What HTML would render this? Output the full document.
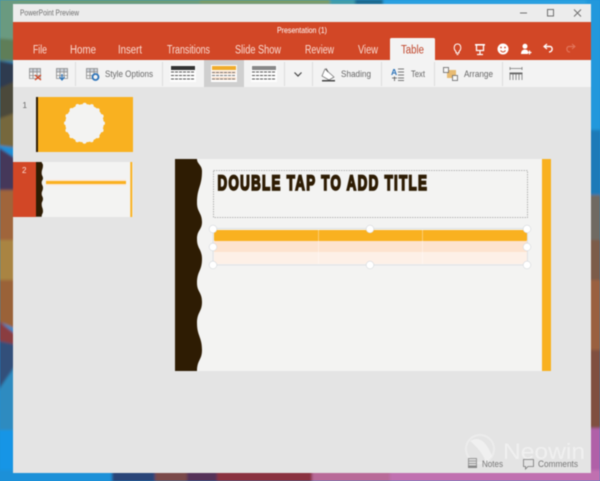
<!DOCTYPE html>
<html><head><meta charset="utf-8">
<style>
html,body{margin:0;padding:0;width:600px;height:481px;overflow:hidden;background:#1a90d8}
svg{display:block;filter:blur(.4px)}
text{font-family:"Liberation Sans",sans-serif}
</style></head><body>
<svg width="600" height="481" viewBox="0 0 600 481" xmlns="http://www.w3.org/2000/svg">
<defs>
<filter id="b" x="-10%" y="-10%" width="120%" height="120%"><feGaussianBlur stdDeviation="1.200"/></filter>
<path id="wave" d="M175 159H197C197 164 202 165 202 171C202 187 197 187 197 203C197 212 202 213 202 222C202 230 197 230 197 239C197 249 202 249 202 259C202 271 197 271 197 283C197 292 202 292 202 302C202 312 197 312 197 323C197 336 202 337 202 350C202 360 197 360 197 371H175Z"/>
</defs>
<!-- wallpaper -->
<g filter="url(#b)">
<rect x="-5" y="-5" width="610" height="491" fill="#1a90d8"/>
<rect x="-5" y="-5" width="205" height="10" fill="#6c9c78"/>
<rect x="200" y="-5" width="130" height="10" fill="#7a9c68"/>
<rect x="330" y="-5" width="30" height="10" fill="#3f9ca8"/>
<rect x="355" y="-5" width="28" height="10" fill="#1d6a90"/>
<rect x="383" y="-5" width="222" height="10" fill="#2aa0e0"/>
<polygon points="-5,-5 18,-5 18,60 -5,60" fill="#6a9a80"/>
<polygon points="-5,38 18,40 18,62 -5,60" fill="#5f7e58"/>
<polygon points="-5,60 18,64 18,100 -5,95" fill="#2f3a4f"/>
<polygon points="-5,90 18,80 18,118 -5,130" fill="#4c4a3a"/>
<polygon points="-5,120 18,112 18,148 -5,145" fill="#76683c"/>
<polygon points="-5,145 18,160 18,200 -5,190" fill="#45395a"/>
<polygon points="-5,190 18,190 18,240 -5,240" fill="#a0653a"/>
<polygon points="-5,240 18,240 18,283 -5,283" fill="#a98442"/>
<polygon points="-5,280 18,280 18,330 -5,320" fill="#9a6238"/>
<polygon points="-5,318 18,336 18,350 -5,345" fill="#8a3c40"/>
<polygon points="-5,340 18,345 18,362 -5,395" fill="#30507a"/>
<polygon points="-5,395 18,362 18,430 -5,430" fill="#2f8bc0"/>
<rect x="-5" y="430" width="18" height="56" fill="#1495e6"/>
<rect x="586" y="-5" width="19" height="135" fill="#2198dc"/>
<rect x="586" y="130" width="19" height="70" fill="#1c7ab8"/>
<rect x="586" y="195" width="19" height="50" fill="#6f6a62"/>
<rect x="586" y="240" width="19" height="40" fill="#7c5c4a"/>
<rect x="586" y="280" width="19" height="70" fill="#9a6040"/>
<rect x="586" y="350" width="19" height="80" fill="#80503f"/>
<rect x="586" y="428" width="19" height="58" fill="#b060a8"/>
<rect x="-5" y="470" width="117" height="16" fill="#1a90d8"/>
<rect x="112" y="470" width="44" height="16" fill="#2c4478"/>
<rect x="155" y="470" width="32" height="16" fill="#7a4a4a"/>
<rect x="187" y="470" width="30" height="16" fill="#553058"/>
<rect x="217" y="470" width="95" height="16" fill="#8a3040"/>
<rect x="312" y="470" width="78" height="16" fill="#b86a98"/>
<rect x="390" y="470" width="215" height="16" fill="#c070b0"/>
</g>
<!-- window -->
<rect x="13" y="4" width="578" height="469" fill="#e4e4e4"/>
<rect x="13" y="4" width="578" height="18" fill="#ececec"/>
<text x="20" y="15.500" font-size="8" fill="#6e6e6e" textLength="59" lengthAdjust="spacingAndGlyphs">PowerPoint Preview</text>
<g stroke="#707070" fill="none" stroke-width="1">
<path d="M520 13H527"/>
<rect x="547.500" y="9.500" width="6" height="6.500"/>
<path d="M574 9.500L581 16.500M581 9.500L574 16.500"/>
</g>
<!-- red header -->
<rect x="13" y="22" width="578" height="38" fill="#d24726"/>
<text x="277" y="33" font-size="8.500" fill="#fff" textLength="50" lengthAdjust="spacingAndGlyphs">Presentation (1)</text>
<g font-size="11.500" fill="#f9dcd3">
<text x="33" y="53.500" textLength="14" lengthAdjust="spacingAndGlyphs">File</text>
<text x="70" y="53.500" textLength="26" lengthAdjust="spacingAndGlyphs">Home</text>
<text x="118" y="53.500" textLength="24" lengthAdjust="spacingAndGlyphs">Insert</text>
<text x="167" y="53.500" textLength="43" lengthAdjust="spacingAndGlyphs">Transitions</text>
<text x="235" y="53.500" textLength="46" lengthAdjust="spacingAndGlyphs">Slide Show</text>
<text x="305" y="53.500" textLength="29" lengthAdjust="spacingAndGlyphs">Review</text>
<text x="358" y="53.500" textLength="20" lengthAdjust="spacingAndGlyphs">View</text>
</g>
<path d="M390 60V39.500Q390 38 391.500 38H433.500Q435 38 435 39.500V60Z" fill="#f3f3f3"/>
<text x="401" y="53.500" font-size="11.500" fill="#c0452a" textLength="23" lengthAdjust="spacingAndGlyphs">Table</text>
<!-- header icons -->
<g fill="none" stroke="#fff" stroke-width="1">
<path d="M456 51.500C453 49 454 44 457.500 44C461 44 462 49 459 51.500V53H456Z"/>
<path d="M456.500 54.500H458.500"/>
<path d="M475 44.800H485" stroke-width="1.600"/>
<path d="M476.500 45V50.500H483.500V45" stroke-width="1.300"/>
<path d="M480 50.500V54M477 54.500H483" stroke-width="1.200"/>
<path d="M544 46.500H550C553 46.500 553 52 549 52" stroke-width="1.400"/>
<path d="M547 44L544 46.500L547 49" stroke-width="1.200"/>
</g>
<circle cx="503" cy="49" r="5.500" fill="#fff"/>
<circle cx="501" cy="47.500" r=".9" fill="#d24726"/><circle cx="505" cy="47.500" r=".9" fill="#d24726"/>
<path d="M500.500 50.500Q503 53.500 505.500 50.500" stroke="#d24726" fill="none"/>
<circle cx="525" cy="46.300" r="2.500" fill="#fff"/>
<path d="M521 54C521 50.500 523 49.500 525 49.500C526.500 49.500 527.500 50 528 51V54Z" fill="#fff"/>
<path d="M529.500 50.500V54.500M527.500 52.500H531.500" stroke="#fff" stroke-width="1.200"/>
<path d="M575 46.500H569C566 46.500 566 52 570 52" stroke="#e2765c" fill="none" stroke-width="1.200"/>
<path d="M572 44L575 46.500L572 49" stroke="#e2765c" fill="none"/>
<!-- ribbon -->
<rect x="13" y="60" width="578" height="27" fill="#f3f3f3"/>
<rect x="204" y="60" width="40" height="27" fill="#cfcfcf"/>
<g stroke="#dcdcdc">
<path d="M75.500 62V86M162.500 62V86M284.500 62V86M312.500 62V86M381.500 62V86M434.500 62V86M502.500 62V86"/>
</g>
<!-- table icons -->
<rect x="29.500" y="68.500" width="11" height="3.500" fill="#c9ced6"/>
<rect x="56.500" y="68.500" width="11" height="3.500" fill="#c9ced6"/>
<rect x="86.500" y="68.500" width="11" height="3.500" fill="#c9ced6"/>
<g fill="none" stroke="#8a8a8a" stroke-width=".8">
<path d="M29.500 68.500H40.500V78.500H29.500ZM29.500 72H40.500M29.500 75.500H40.500M33 68.500V78.500M37 68.500V78.500"/>
<path d="M56.500 68.500H67.500V78.500H56.500ZM56.500 72H67.500M56.500 75.500H67.500M60 68.500V78.500M64 68.500V78.500"/>
<path d="M86.500 68.500H97.500V78.500H86.500ZM86.500 72H97.500M86.500 75.500H97.500M90 68.500V78.500M94 68.500V78.500"/>
</g>
<path d="M35 75L41 80M41 75L35 80" stroke="#d24726" stroke-width="1.300"/>
<path d="M62 74V79M59.500 77L62 80L64.500 77" stroke="#2b72b8" fill="none" stroke-width="1.200"/>
<circle cx="95.500" cy="77" r="3" fill="#f3f3f3" stroke="#2b72b8" stroke-width="1.800"/>
<text x="105" y="77" font-size="9.500" fill="#666" textLength="48" lengthAdjust="spacingAndGlyphs">Style Options</text>
<!-- gallery -->
<rect x="170" y="65" width="26" height="17" fill="#fdfdfd"/>
<rect x="171" y="66" width="24" height="4" fill="#333"/>
<rect x="211" y="65" width="26" height="17" fill="#fdfdfd"/>
<rect x="212" y="66" width="24" height="4" fill="#f0ac2c"/>
<rect x="212" y="71" width="24" height="3" fill="#fde3cf"/>
<rect x="212" y="77" width="24" height="3" fill="#fde3cf"/>
<rect x="251" y="65" width="26" height="17" fill="#fdfdfd"/>
<rect x="252" y="66" width="24" height="4" fill="#888"/>
<g stroke="#555" stroke-width="1" stroke-dasharray="3 1">
<path d="M171 72H195M171 75.500H195M171 79H195"/>
<path d="M212 72.500H236M212 75.500H236M212 79H236" stroke="#777"/>
<path d="M252 72H276M252 75.500H276M252 79H276"/>
</g>
<path d="M294.500 72.500L298 76L301.500 72.500" stroke="#444" fill="none" stroke-width="1.200"/>
<!-- shading -->
<path d="M325 69L334 77L329 80L322 76Z" fill="#fff" stroke="#777" stroke-width=".8"/>
<rect x="322" y="80" width="13" height="1.500" fill="#444"/>
<path d="M326 68.500L328 72" stroke="#555"/>
<text x="341" y="77" font-size="9.500" fill="#666" textLength="30" lengthAdjust="spacingAndGlyphs">Shading</text>
<text x="391" y="75" font-size="8.500" font-weight="bold" fill="#2b72b8">A</text>
<path d="M392 78H397M394.500 76.500V81" stroke="#555" stroke-width=".8"/>
<path d="M398 69H404M398 72H404M398 75H404M398 78H404M398 80.500H404" stroke="#777" stroke-width=".9"/>
<text x="411" y="77" font-size="9.500" fill="#666" textLength="14" lengthAdjust="spacingAndGlyphs">Text</text>
<!-- arrange -->
<rect x="447" y="70" width="9" height="8" fill="#e8bb72"/>
<rect x="443.500" y="67.500" width="5" height="5" fill="#f7f7f7" stroke="#666" stroke-width=".8"/>
<rect x="452.500" y="75.500" width="5" height="5" fill="#f7f7f7" stroke="#666" stroke-width=".8"/>
<text x="464" y="77" font-size="9.500" fill="#666" textLength="29" lengthAdjust="spacingAndGlyphs">Arrange</text>
<path d="M510 68.500H522M510 67V70M522 67V70" stroke="#777" stroke-width=".8" fill="none"/>
<path d="M510 74H522V80M510 74V80M513 74V80M516 74V80M519 74V80" stroke="#777" stroke-width=".8" fill="none"/>
<rect x="509.500" y="72.500" width="13" height="1.500" fill="#666"/>
<!-- thumbnails -->
<text x="22.500" y="108" font-size="8" fill="#666">1</text>
<rect x="36" y="97" width="97" height="55" fill="#f9b120"/>
<rect x="36" y="97" width="2" height="55" fill="#2e1c03"/>
<circle cx="84.500" cy="123.200" r="19.200" fill="#f3f3f2"/>
<circle cx="84.500" cy="123.200" r="18.500" fill="none" stroke="#f3f3f2" stroke-width="4" stroke-linecap="round" stroke-dasharray="0 7.265"/>
<rect x="13" y="162" width="23" height="55" fill="#d24726"/>
<text x="22" y="173" font-size="8" fill="#fbe0d8">2</text>
<rect x="36" y="162" width="97" height="55" fill="#f3f3f2"/>
<use href="#wave" transform="translate(36,162) scale(.258) translate(-175,-159)" fill="#2e1c03"/>
<rect x="130.300" y="162" width="2" height="55" fill="#f9b120"/>
<rect x="46" y="179.500" width="80" height="6" fill="#fde3cf" opacity=".7"/>
<rect x="46" y="181" width="80" height="3" fill="#f9b120"/>
<!-- slide -->
<rect x="175" y="159" width="376" height="212" fill="#f3f3f2"/>
<use href="#wave" fill="#2e1c03"/>
<rect x="542" y="159" width="9" height="212" fill="#f9b120"/>
<rect x="213.500" y="170.500" width="314" height="47" fill="none" stroke="#a3a3a3" stroke-width=".8" stroke-dasharray="1.500 1"/>
<text transform="translate(217.500,189.800) scale(.62,1)" font-size="21.500" font-weight="bold" fill="#2e1c03" stroke="#2e1c03" stroke-width="1.800" stroke-linejoin="miter" letter-spacing="2.150">DOUBLE TAP TO ADD TITLE</text>
<!-- table -->
<rect x="214" y="230" width="313" height="11" rx="1" fill="#f9b120"/>
<rect x="214" y="241" width="313" height="11" fill="#fde3cf"/>
<rect x="214" y="252" width="313" height="12" fill="#fdf0e7"/>
<path d="M318.500 230V264M422.500 230V264" stroke="#fff" stroke-opacity=".45" stroke-width=".8"/>
<rect x="213" y="228.500" width="314.500" height="36.500" fill="none" stroke="#dfe2e5" stroke-width="1"/>
<g fill="#fff" stroke="#d6d9dd" stroke-width=".6">
<circle cx="213" cy="229" r="3.800"/><circle cx="370" cy="229" r="3.800"/><circle cx="527" cy="229" r="3.800"/>
<circle cx="213" cy="247" r="3.800"/><circle cx="527" cy="247" r="3.800"/>
<circle cx="213" cy="265" r="3.800"/><circle cx="370" cy="265" r="3.800"/><circle cx="527" cy="265" r="3.800"/>
</g>
<!-- watermark -->
<circle cx="480" cy="449" r="14" fill="none" stroke="#fff" stroke-opacity=".3" stroke-width="2"/>
<path d="M470 441C478 436 486 440 492 456L486 462C482 452 476 446 470 441Z" fill="#fff" fill-opacity=".45"/>
<text x="503" y="459" font-size="22" fill="#fff" fill-opacity=".45" textLength="82" lengthAdjust="spacingAndGlyphs">Neowin</text>
<!-- bottom -->
<rect x="468.500" y="458.500" width="8" height="9" fill="#ddd" stroke="#888" stroke-width=".8"/>
<path d="M469 461H476M469 463.500H476" stroke="#888" stroke-width=".7"/>
<rect x="468" y="465.500" width="9" height="2.500" fill="#888"/>
<text x="482" y="467" font-size="9.500" fill="#777" textLength="21" lengthAdjust="spacingAndGlyphs">Notes</text>
<path d="M523.500 459.500H533.500V466.500H528L525.500 469V466.500H523.500Z" fill="none" stroke="#777" stroke-width=".8"/>
<text x="538" y="467" font-size="9.500" fill="#777" textLength="40" lengthAdjust="spacingAndGlyphs">Comments</text>
</svg>
</body></html>
